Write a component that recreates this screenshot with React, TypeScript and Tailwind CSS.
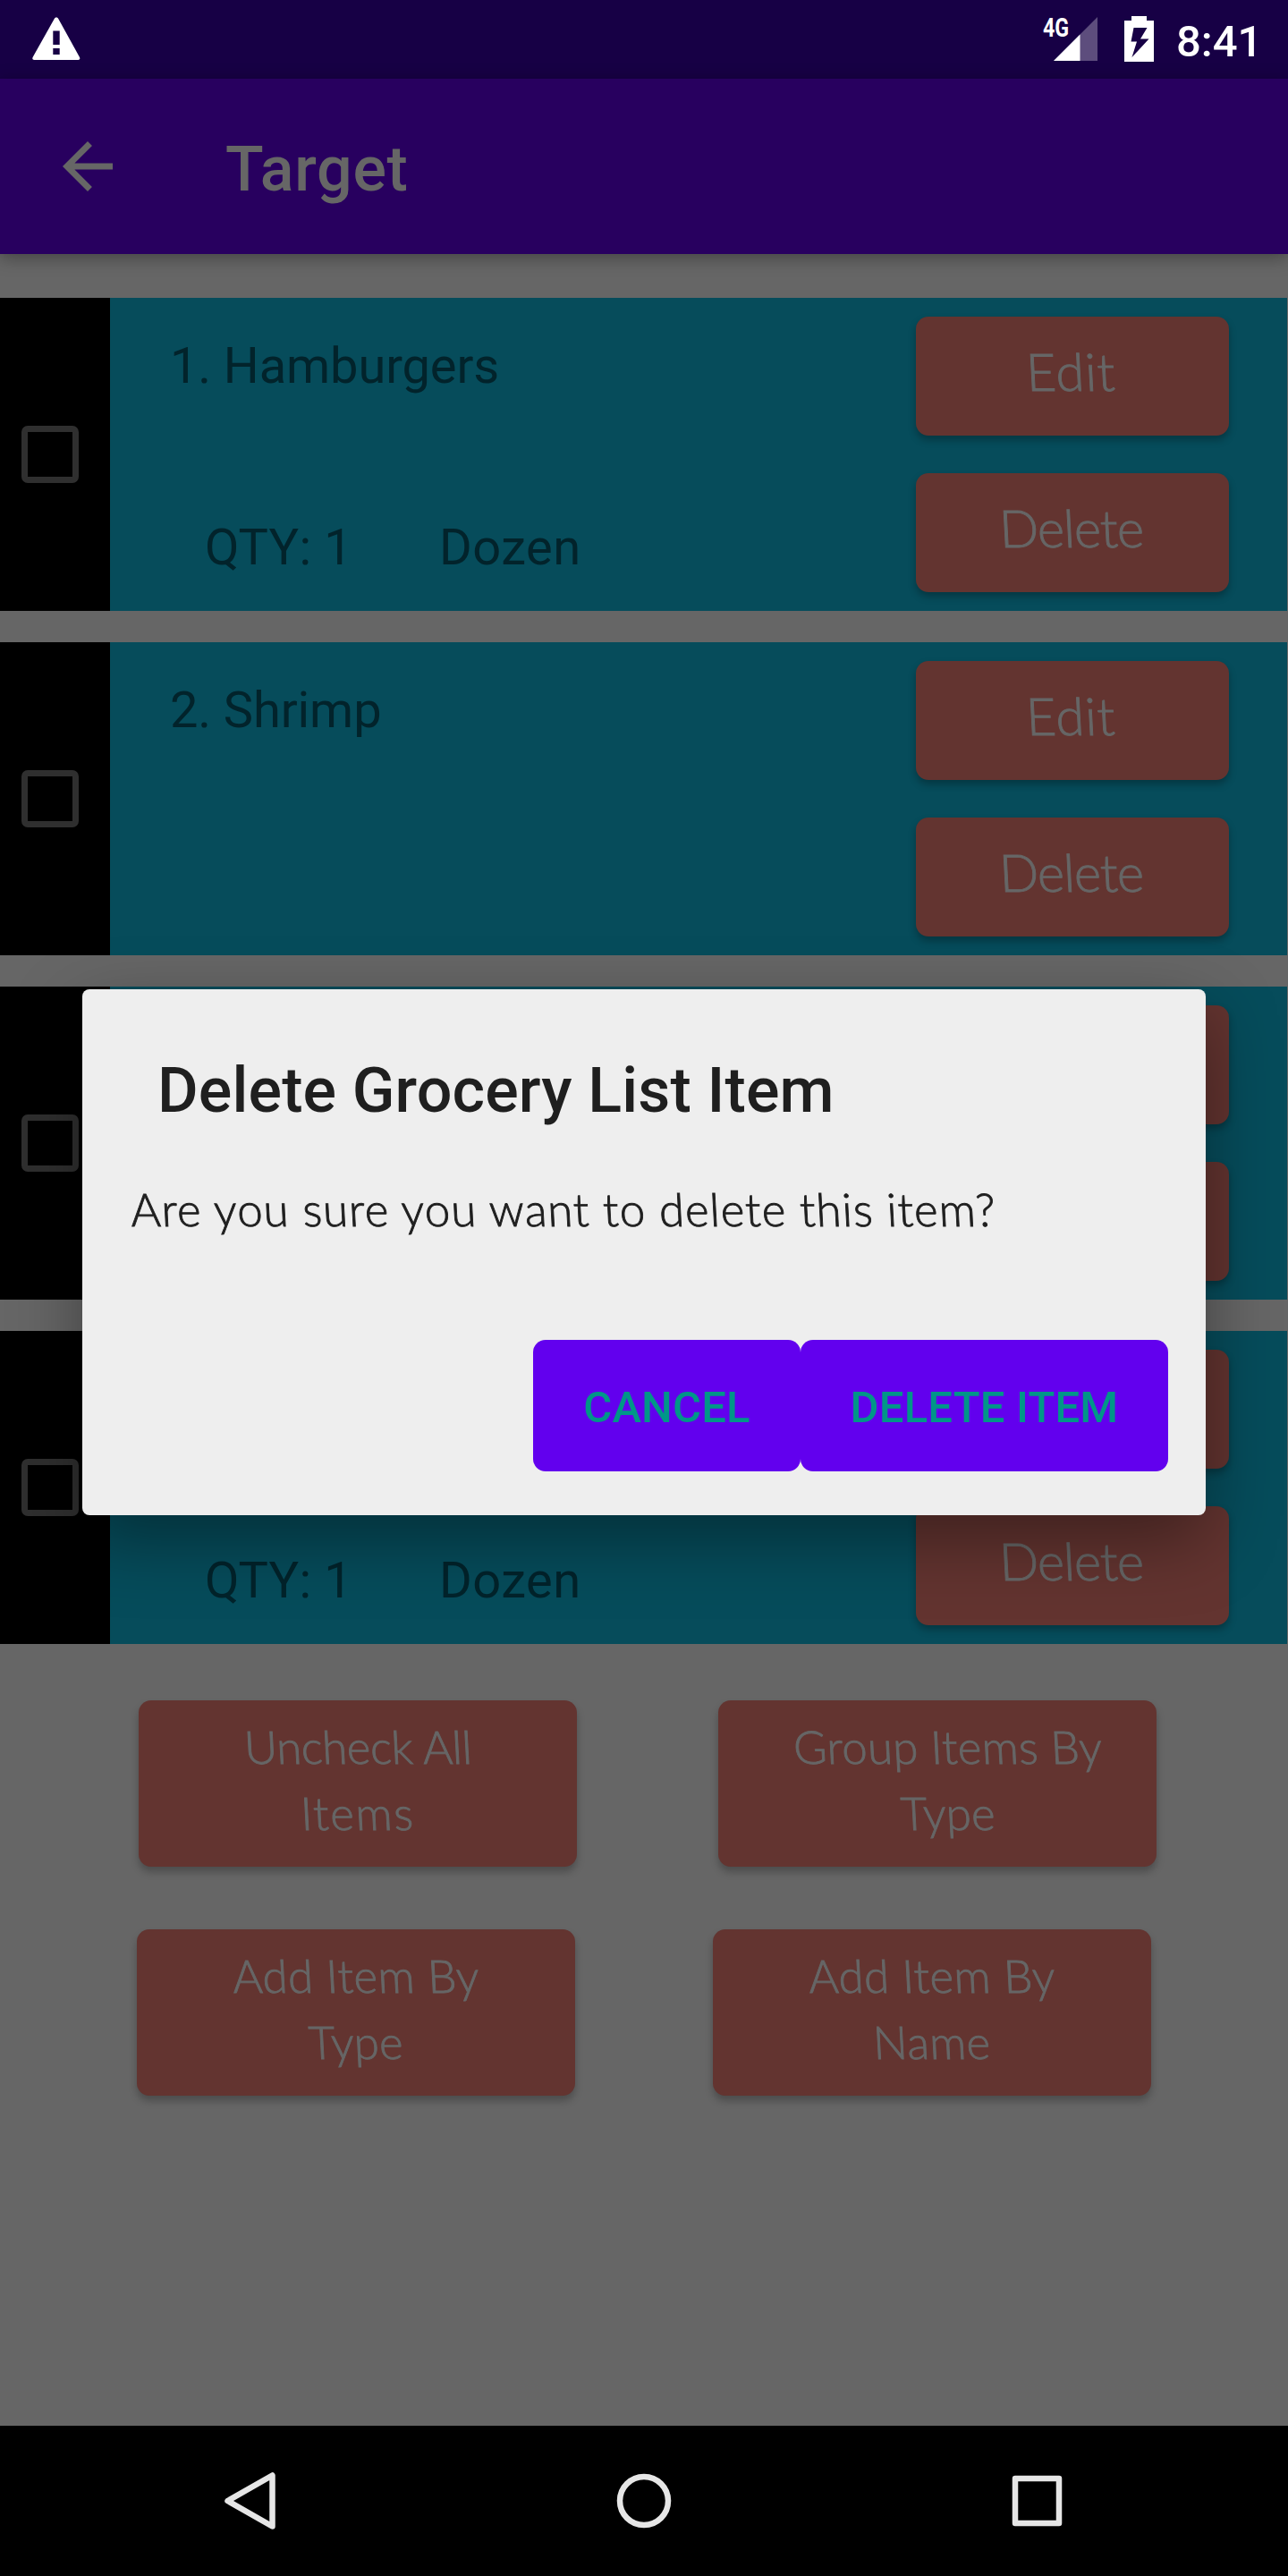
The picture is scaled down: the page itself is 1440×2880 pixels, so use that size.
import React from 'react';
import clsx from 'clsx';

const CASUAL =
  "inline-block whitespace-nowrap skew-x-[3deg] font-light font-['Coming_Soon','Lato',sans-serif] [-webkit-text-stroke:0.9px_currentColor]";

function StatusBar() {
  return (
    <header className="flex h-[88px] shrink-0 items-start bg-[#170045] pl-[36px] text-white">
      <svg className="mt-[19px] h-[49px] w-[54px]" viewBox="0 0 54 49">
        <path
          fillRule="evenodd"
          fill="#fff"
          d="M27 0.5c1.1 0 1.9.6 2.4 1.7L53 45c.8 1.700 0 3-1.600 3H2.200C.6 48-.2 46.700.6 45L24.600 2.200C25.100 1.100 25.900.5 27 .5zM23.300 15.500v15.500h7.400V15.500zM23.300 35v7h7.400v-7z"
        />
      </svg>
      <div className="mt-[18px] ml-[1076px] flex">
        <span className="w-[12px] whitespace-nowrap font-['Roboto'] text-[29px] leading-[27px] font-bold">
          <span className="inline-block origin-left scale-x-[0.8]">4G</span>
        </span>
        <svg className="mt-px h-[50px] w-[49px]" viewBox="0 0 49 50">
          <path d="M0 49L49 0v49z" fill="#fff" fillOpacity="0.3" />
          <path d="M0 49L29.500 19.500V49z" fill="#fff" />
        </svg>
      </div>
      <svg className="mt-[18px] ml-[30px] h-[51px] w-[33px]" viewBox="0 0 33 51">
        <path
          fillRule="evenodd"
          fill="#fff"
          d="M8 0h17v5h8v46H0V5h8zM10.500 13L7.500 28.500h6.500L8.500 46 27.500 25.500h-9.500L25.500 13z"
        />
      </svg>
      <span className="mt-[22px] ml-[25px] font-['Roboto'] text-[49px] leading-none font-medium">8:41</span>
    </header>
  );
}

function AppBar() {
  return (
    <div className="relative flex h-[196px] shrink-0 items-start bg-[#28005f] pl-[56px] text-[#666] shadow-[0_4px_18px_rgba(0,0,0,0.35)]">
      <svg className="mt-[56px] size-[84px]" viewBox="0 0 24 24" fill="currentColor">
        <path d="M20 11H7.830l5.590-5.590L12 4l-8 8 8 8 1.410-1.410L7.830 13H20v-2z" />
      </svg>
      <h1 className="mt-[66px] ml-[112px] font-['Roboto'] text-[70px] leading-none font-medium tracking-[0.7px]">
        Target
      </h1>
    </div>
  );
}

function RowButton({ label, tracking }: { label: string; tracking: string }) {
  return (
    <button className="flex h-[133px] w-[350px] items-start justify-center rounded-[14px] bg-[#633430] pt-[19px] pr-[3px] text-[#666] shadow-[0_5px_9px_rgba(0,0,0,0.28)]">
      <span className={clsx(CASUAL, 'text-[58px] leading-[84px]', tracking)}>{label}</span>
    </button>
  );
}

type Item = { name?: string; qty?: string; unit?: string };

function GroceryRow({ name, qty, unit }: Item) {
  return (
    <li className="mr-px flex h-[350px] bg-[#064c5b] text-[#02232b]">
      <div className="flex w-[123px] items-center bg-black pl-[24px]">
        <span className="size-[64px] rounded-[7px] border-[7px] border-[#2f2f2f]" />
      </div>
      <div className="flex flex-1 flex-col pt-[48px] font-['Roboto'] text-[56px] leading-none">
        <span className="h-[203px] pl-[67px] tracking-[-0.1px]">{name}</span>
        <div className="flex pl-[106px]">
          <span className="w-[262px] tracking-[0.2px]">{qty}</span>
          <span className="tracking-[0.5px]">{unit}</span>
        </div>
      </div>
      <div className="flex flex-col gap-[42px] pt-[21px] pr-[65px]">
        <RowButton label="Edit" tracking="tracking-[0.8px]" />
        <RowButton label="Delete" tracking="tracking-[-1px]" />
      </div>
    </li>
  );
}

const items: Item[] = [
  { name: '1. Hamburgers', qty: 'QTY: 1', unit: 'Dozen' },
  { name: '2. Shrimp' },
  {},
  { qty: 'QTY: 1', unit: 'Dozen' },
];

function ActionButton({ lines, className }: { lines: [string, string][]; className?: string }) {
  return (
    <button
      className={clsx(
        'flex h-[186px] w-[490px] flex-col items-center rounded-[14px] bg-[#633430] pt-[15px] text-[#666] shadow-[0_6px_8px_rgba(0,0,0,0.25)]',
        className,
      )}
    >
      {lines.map(([text, tracking]) => (
        <span key={text} className={clsx(CASUAL, 'text-[51px] leading-[74px]', tracking)}>
          {text}
        </span>
      ))}
    </button>
  );
}

function Dialog() {
  return (
    <section
      role="dialog"
      className="absolute top-[1106px] left-[92px] flex h-[588px] w-[1256px] flex-col rounded-[8px] bg-[#eee] text-[#1f1f1f] shadow-[0_28px_80px_rgba(0,0,0,0.38)]"
    >
      <h2 className="mt-[78px] ml-[84px] font-['Roboto'] text-[70px] leading-none font-medium tracking-[0.15px]">
        Delete Grocery List Item
      </h2>
      <p className="mt-[61px] ml-[54px] leading-[74px]">
        <span className={clsx(CASUAL, 'text-[51px] leading-[74px] tracking-[0.98px]')}>
          Are you sure you want to delete this item?
        </span>
      </p>
      <div className="mt-auto mr-[42px] mb-[49px] flex justify-end font-['Roboto'] text-[49px] leading-none font-medium text-[#009688]">
        <button className="h-[147px] w-[299px] rounded-[14px] bg-[#6200ee] pt-[3px] tracking-[0.2px]">CANCEL</button>
        <button className="h-[147px] w-[411px] rounded-[14px] bg-[#6200ee] pt-[3px] tracking-[0.2px]">DELETE ITEM</button>
      </div>
    </section>
  );
}

function NavBar() {
  return (
    <nav className="mt-auto flex h-[168px] shrink-0 items-center justify-between bg-black pr-[246px] pl-[248px]">
      <svg className="size-[68px]" viewBox="0 0 68 68" fill="none" stroke="#e6e6e6" strokeWidth="6.500" strokeLinejoin="round">
        <path d="M56.500 5.500v57L6.500 34z" />
      </svg>
      <svg className="size-[68px]" viewBox="0 0 68 68" fill="none" stroke="#e6e6e6" strokeWidth="6.500">
        <circle cx="33" cy="34" r="27" />
      </svg>
      <svg className="size-[68px]" viewBox="0 0 68 68" fill="none" stroke="#e6e6e6" strokeWidth="6.500" strokeLinejoin="round">
        <rect x="9" y="9" width="49" height="50" />
      </svg>
    </nav>
  );
}

export default function App() {
  return (
    <main className="relative flex h-[2880px] w-[1440px] flex-col overflow-hidden bg-[#666]">
      <StatusBar />
      <AppBar />
      <ul className="mt-[49px] flex flex-col gap-[35px]">
        {items.map((item, i) => (
          <GroceryRow key={i} {...item} />
        ))}
      </ul>
      <div className="mt-[63px] flex flex-col gap-[70px]">
        <div className="flex gap-[158px] pl-[155px]">
          <ActionButton lines={[['Uncheck All', 'tracking-[-0.5px]'], ['Items', 'tracking-[1.6px]']]} />
          <ActionButton
            className="pl-[24px]"
            lines={[['Group Items By', 'tracking-[0.2px]'], ['Type', 'tracking-[0px]']]}
          />
        </div>
        <div className="flex gap-[154px] pl-[153px]">
          <ActionButton lines={[['Add Item By', 'tracking-[0.4px]'], ['Type', 'tracking-[0px]']]} />
          <ActionButton lines={[['Add Item By', 'tracking-[0.4px]'], ['Name', 'tracking-[0.3px]']]} />
        </div>
      </div>
      <NavBar />
      <Dialog />
    </main>
  );
}
